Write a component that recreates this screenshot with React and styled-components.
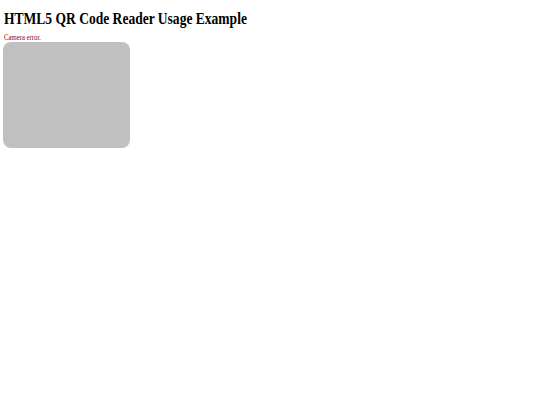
import styled, { createGlobalStyle } from 'styled-components';

const GlobalStyle = createGlobalStyle`
  html, body {
    margin: 0;
    background: #ffffff;
  }
  body {
    padding: 4px 3px;
    font-family: "Liberation Serif", "Times New Roman", serif;
    color: #000000;
  }
`;

const Page = styled.div`
  display: flex;
  flex-direction: column;
  align-items: flex-start;
`;

const Title = styled.h1`
  margin: 6px 0 5px 1px;
  font-size: 16.5px;
  font-weight: 700;
  line-height: 18px;
  white-space: nowrap;
  transform: scaleX(0.82);
  transform-origin: left center;
`;

const Status = styled.div`
  margin-left: 1px;
  color: ${({ $error }) => ($error ? '#8b0000' : '#000000')};
  font-size: 8px;
  line-height: 9px;
  white-space: nowrap;
  transform: scaleX(0.84);
  transform-origin: left center;
`;

const Viewer = styled.div`
  width: 127px;
  height: 106px;
  border-radius: 8px;
  background: #c0c0c0;
`;

function App() {
  return (
    <>
      <GlobalStyle />
      <Page>
        <Title>HTML5 QR Code Reader Usage Example</Title>
        <Status $error>Camera error.</Status>
        <Viewer />
      </Page>
    </>
  );
}

export default App;
